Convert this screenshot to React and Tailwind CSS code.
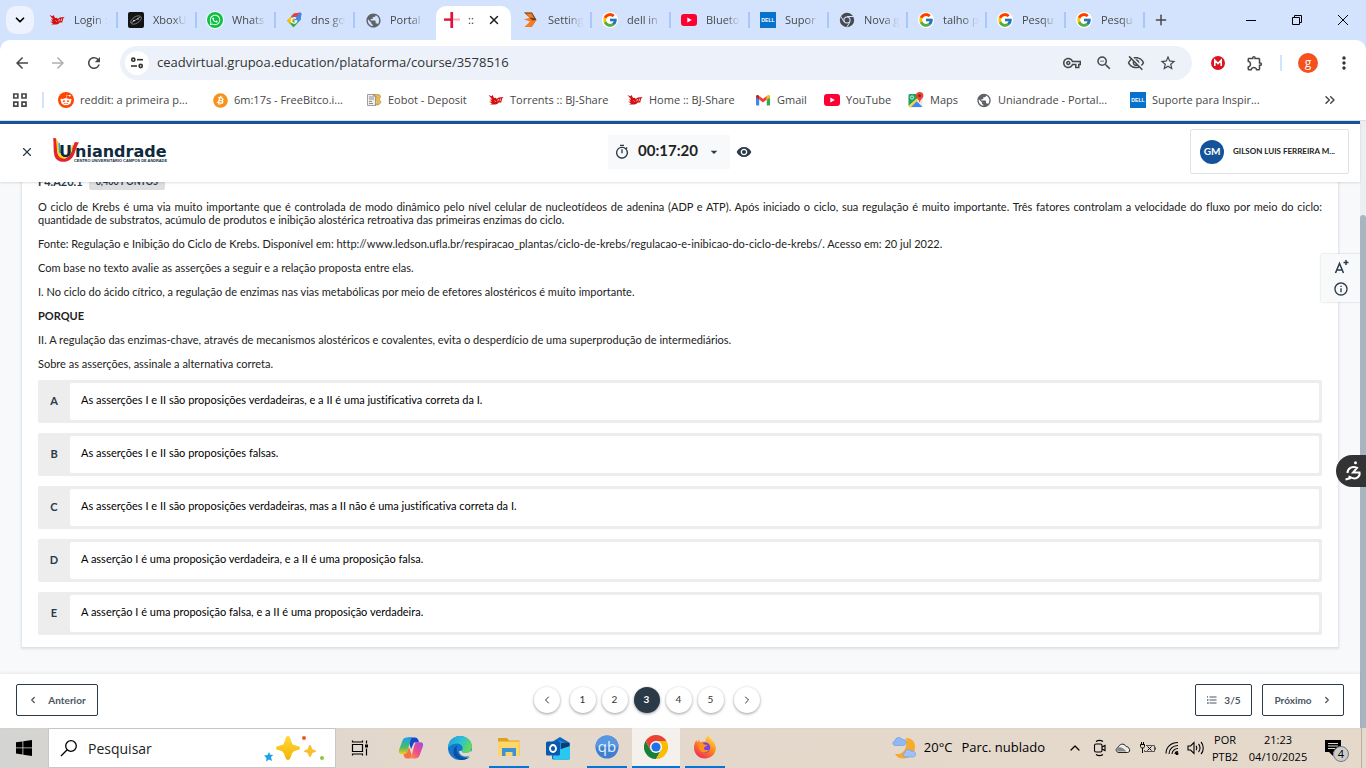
import { useState } from 'react'
import {
  MdArrowBack, MdArrowForward, MdRefresh, MdOutlineVpnKey, MdOutlineZoomOut, MdOutlineVisibilityOff,
  MdStarOutline, MdMoreVert, MdPublic, MdOutlineTimer, MdVisibility, MdArrowDropDown,
  MdFormatListNumbered, MdInfoOutline, MdOutlineExtension,
} from 'react-icons/md'
import { FcGoogle } from 'react-icons/fc'
import { FaRedditAlien, FaBitcoin, FaWhatsapp } from 'react-icons/fa'
import { ChevronLeft, ChevronRight, ChevronsRight, ChevronDown, ChevronUp, Plus, X } from 'lucide-react'

/* ---------- Ícones ---------- */

const Dragon = () => (
  <svg viewBox="0 0 16 16" className="size-4">
    <path d="M.5 3 3.500 4.200 4.600 3 6 6l2-.3L8.600 7l2.200-1.400 4.800-.6-1.400 1.400-1 4-2.400.2-1.600 1.400-2 .6H2.200l1.800-1.400L1 9.800l3-.4L1.600 7.600l2.600-.2z" fill="#d40f0f" />
    <path d="m6.500 8.600 1.200 1.200M10.500 7l-.8 2.400M12.600 6.600 12 9.200" stroke="#fff" strokeWidth=".7" />
  </svg>
)

const Xbox = () => (
  <svg viewBox="0 0 16 16" className="size-4">
    <rect width="16" height="16" rx="2" fill="#141414" />
    <ellipse cx="8" cy="8" rx="6" ry="3.2" transform="rotate(-32 8 8)" fill="none" stroke="#999" strokeWidth=".7" />
    <path d="M3.500 10.500c2-1 5.500-3.400 8.500-5.500" stroke="#ddd" strokeWidth=".7" fill="none" />
    <circle cx="6" cy="8.500" r=".8" fill="#eee" /><circle cx="10" cy="7" r=".7" fill="#eee" />
  </svg>
)

const Whats = () => (
  <span className="flex size-4 items-center justify-center rounded-full bg-[#0cc143] ring-1 ring-white">
    <FaWhatsapp className="size-3 text-white" />
  </span>
)

const GoogleTag = () => (
  <svg viewBox="0 0 16 16" className="size-4">
    <path d="m1 8.500 6.500 7L14.500 8l1-6.500z" fill="#34a853" />
    <path d="m1 8.500 3 3.500L11 5 8 1.500z" fill="#fbbc04" />
    <path d="M8 1.500 14.500.5l1 1-1 6L12 10 5 4.500z" fill="#4285f4" />
    <path d="M8 1.500 14.500.5 10 5 5 4.500z" fill="#ea4335" />
    <path d="M10 6.600A2.700 2.700 0 1 0 10.700 9H8.400" fill="none" stroke="#fff" strokeWidth="1.300" />
  </svg>
)

const Globe = () => <MdPublic className="size-[17px] text-[#5f6368]" />

const GoogleG = () => (
  <span className="flex size-4 items-center justify-center rounded-full bg-white"><FcGoogle className="size-4" /></span>
)

const Settings = () => (
  <svg viewBox="0 0 16 16" className="size-4">
    <path d="M1 .5h8L13.500 8 9 15H1.500L7 9.500.8 7.200 6.500 6z" fill="#f47b20" />
    <path d="M1 .5h8L13.500 8l-3.700.5-3-2.500H8z" fill="#333" opacity=".75" />
    <path d="M3 1.500h5.500l2.700 4.700-4.500-.9z" fill="#f47b20" />
  </svg>
)

const YouTube = () => (
  <svg viewBox="0 0 16 16" className="size-4">
    <rect y="2" width="16" height="12" rx="3" fill="#f03" />
    <path d="m6.300 5.400 4.500 2.600-4.500 2.600z" fill="#fff" />
  </svg>
)

const Dell = () => (
  <svg viewBox="0 0 16 16" className="size-4">
    <rect width="16" height="16" fill="#0672cb" />
    <text x="8" y="10" textAnchor="middle" fontSize="5.200" fontWeight="700" fill="#fff" fontFamily="Liberation Sans, sans-serif">DELL</text>
  </svg>
)

const ChromeGray = () => (
  <svg viewBox="0 0 16 16" className="size-4">
    <circle cx="8" cy="8" r="7.200" fill="#474b50" />
    <circle cx="8" cy="8" r="3.600" fill="#d3e3fd" /><circle cx="8" cy="8" r="2.500" fill="#474b50" />
    <path d="M8 4.500h6.800M5 9.800 1.700 4.200M11 9.800 7.700 15.300" stroke="#d3e3fd" strokeWidth="1" />
  </svg>
)

const Cross = () => (
  <svg viewBox="0 0 16 16" className="size-4">
    <path d="M6.300 0h3v6.500H16v2H9.300V16h-3V8.500H0v-2h6.300z" fill="#f7a8b0" />
    <path d="M6.500 0H9v16H6.500zM0 6.500h9v2.200H0z" fill="#dc143c" />
  </svg>
)

const Reddit = () => (
  <span className="flex size-4 items-center justify-center rounded-full bg-[#ff4500]">
    <FaRedditAlien className="size-3 text-white" />
  </span>
)

const Bitcoin = () => <FaBitcoin className="size-[15px] text-[#f7931a]" />

const Eobot = () => (
  <svg viewBox="0 0 16 16" className="size-4">
    <path d="M1.500 2.500h8v11h-8z" fill="#eee" stroke="#888" strokeWidth=".8" />
    <path d="M3 5h5M3 7h5M3 9.500h3M3 11.500h4" stroke="#777" strokeWidth=".8" />
    <path d="M7 3.500c4-1.500 7-1 7.500.5S12 7.500 14 8.500s.5 5-5 4.500c2-1.500 3-3 1-4s1-2.500 1-4z" fill="#e9bd55" stroke="#a37b22" strokeWidth=".6" />
  </svg>
)

const Gmail = () => (
  <svg viewBox="0 0 16 16" className="size-4">
    <path d="M1 4v8.500c0 .6.400 1 1 1h2.200V7.500L1 5z" fill="#4285f4" />
    <path d="M15 4v8.500c0 .6-.400 1-1 1h-2.200V7.500L15 5z" fill="#34a853" />
    <path d="M4.200 7.600V3.900L8 6.800l3.800-2.900v3.700L8 10.500z" fill="#ea4335" />
    <path d="M1 4.300v1.100l3.200 2.400V3.900l-.6-.5C2.600 2.600 1 3.300 1 4.300z" fill="#c5221f" />
    <path d="M15 4.300v1.100l-3.200 2.400V3.900l.6-.5c1-.8 2.600-.1 2.600.9z" fill="#fbbc04" />
  </svg>
)

const Maps = () => (
  <svg viewBox="0 0 16 16" className="size-4">
    <rect x=".5" y="2" width="14" height="13.500" rx="1.500" fill="#e8e8e8" />
    <path d="M.5 3.500A1.500 1.500 0 0 1 2 2h8v4L.5 14z" fill="#1da462" />
    <path d="M1 15 8 8.500l6.500 6.500z" fill="#4285f4" />
    <path d="M.5 14 11 4.500l1 1.500L2.500 15.500z" fill="#fdd835" />
    <path d="M11.700 0a3.700 3.700 0 0 0-3.700 3.700C8 6.500 11.300 7 11.700 11c.4-4 3.700-4.500 3.700-7.300A3.700 3.700 0 0 0 11.700 0z" fill="#ea4335" />
    <circle cx="11.700" cy="3.700" r="1.300" fill="#8c1c13" />
    <circle cx="4" cy="5.500" r="1.600" fill="none" stroke="#fff" strokeWidth=".8" />
  </svg>
)

const Tune = () => (
  <svg viewBox="0 0 16 16" className="size-4" fill="none" stroke="#333" strokeWidth="1.600">
    <circle cx="4.300" cy="4.700" r="1.600" /><path d="M8 4.700h6" />
    <circle cx="11.700" cy="11" r="1.600" /><path d="M2 11h6" />
  </svg>
)

const Grid = () => (
  <svg viewBox="0 0 16 16" className="size-4" fill="none" stroke="#474747" strokeWidth="1.700">
    <path d="M1.800 2h4v4h-4zM10 2h4v4h-4zM1.800 10.200h4v4h-4zM10 10.200h4v4h-4z" />
  </svg>
)

const Mega = () => (
  <svg viewBox="0 0 16 16" className="size-4">
    <circle cx="8" cy="8" r="7" fill="#dc1420" />
    <path d="M4.800 11V5.200L8 8.600l3.200-3.400V11" fill="none" stroke="#fff" strokeWidth="1.600" />
  </svg>
)

const Logo = () => (
  <svg width="118" height="30" viewBox="0 0 118 30" aria-label="Uniandrade">
    <path d="M1.200 1.200c1.200-.4 2.500 0 3 .8 1.200 5 .3 10 1.600 15 1 4 7.500 5 11 2.200C20.500 15.500 20 10 23 5.200l4 .4C23 11 24 17 19.500 21.500 14 27 4.500 25.500 2.500 19 1 13.500 2 7 1.200 1.200z" fill="#e5232b" />
    <path d="M5.200 4c1 5 0 9 1.500 12.500 1 3.500 4 4.500 7 4" fill="none" stroke="#ffd400" strokeWidth="2" />
    <path d="M7 6c.8 4 0 7 1.200 10" fill="none" stroke="#24a9e1" strokeWidth="1.600" />
    <path d="M20.800 8c-1.500 4-1.800 8-4.600 10" fill="none" stroke="#ffd400" strokeWidth="1.500" />
    <text x="7" y="20" fontSize="16" fontWeight="700" fill="#0e2a3c" fontFamily="DejaVu Sans, sans-serif">U</text>
    <path d="m24.500 5.500-3 7" stroke="#e5232b" strokeWidth="3" />
    <text x="23" y="20" fontSize="16" fontWeight="700" fill="#0e2a3c" fontFamily="DejaVu Sans, sans-serif">niandrade</text>
    <text x="22" y="25" fontSize="3.900" fontWeight="700" fill="#0e2a3c" fontFamily="Liberation Sans, sans-serif">CENTRO UNIVERSITÁRIO CAMPOS DE ANDRADE</text>
  </svg>
)

/* ---------- Navegador ---------- */

const TABS_LEFT = [['Login :', Dragon], ['XboxU', Xbox], ['Whats', Whats], ['dns go', GoogleTag], ['Portal', Globe]]
const TABS_RIGHT = [
  ['Setting', Settings], ['dell in', GoogleG], ['Blueto', YouTube], ['Supor', Dell], ['Nova g', ChromeGray],
  ['talho p', GoogleG], ['Pesqu', GoogleG], ['Pesqu', GoogleG],
]

const BOOKMARKS = [
  ['reddit: a primeira p...', Reddit, 'w-[154px]'],
  ['6m:17s - FreeBitco.i...', Bitcoin, 'w-[154px]'],
  ['Eobot - Deposit', Eobot, 'w-[122px]'],
  ['Torrents :: BJ-Share', Dragon, 'w-[139px]'],
  ['Home :: BJ-Share', Dragon, 'w-[128px]'],
  ['Gmail', Gmail, 'w-[69px]'],
  ['YouTube', YouTube, 'w-[84px]'],
  ['Maps', Maps, 'w-[68px]'],
  ['Uniandrade - Portal...', Globe, 'w-[154px]'],
  ['Suporte para Inspir...', Dell, 'w-[154px]'],
]

function Tab({ label, Icon, last }) {
  return (
    <button className="flex h-7 w-[79px] shrink-0 items-center pl-2.5">
      <span className="flex w-[25px] shrink-0">
        <Icon />
      </span>
      <span className="w-9 text-left whitespace-nowrap [mask-image:linear-gradient(to_right,#000_55%,rgba(0,0,0,0.1)_90%)]">{label}</span>
      {!last && <span className="ml-auto h-4 w-0.5 bg-[#a8c7fa]" />}
    </button>
  )
}

function TabStrip() {
  return (
    <div className="flex h-10 items-center bg-[#d3e3fd] text-[11px] text-[#474747]">
      <button aria-label="Pesquisar guias" className="mr-[5px] ml-1.5 flex size-7 shrink-0 items-center justify-center rounded-[10px] bg-[#edf3fe]">
        <ChevronDown className="size-3.5 text-black" strokeWidth={3} />
      </button>
      {TABS_LEFT.map(([label, Icon], i) => <Tab key={i} label={label} Icon={Icon} last={i === 4} />)}
      <div className="flex w-[79px] shrink-0 items-end self-end">
        <div className="mx-0.5 flex h-[34px] flex-1 items-center rounded-t-[10px] bg-white pb-1.5 pl-2 text-[#1f1f1f]">
          <Cross />
          <span className="ml-2 w-4">::</span>
          <button aria-label="Fechar guia" className="ml-auto mr-2.5"><X className="size-3.5" strokeWidth={2.5} /></button>
        </div>
      </div>
      {TABS_RIGHT.map(([label, Icon], i) => <Tab key={i} label={label} Icon={Icon} />)}
      <button aria-label="Nova guia" className="ml-2 flex size-4 items-center justify-center"><Plus className="size-4" strokeWidth={2.2} /></button>
      <div className="ml-auto flex text-black">
        <button aria-label="Minimizar" className="flex h-10 w-[46px] items-center justify-center">
          <svg className="size-2.5" viewBox="0 0 10 10"><path d="M0 5.500h10" stroke="#000" /></svg>
        </button>
        <button aria-label="Restaurar" className="flex h-10 w-[46px] items-center justify-center">
          <svg className="size-2.5" viewBox="0 0 10 10" fill="none" stroke="#000"><path d="M.5 2.500h7v7h-7zM2.500 2.500v-2h7v7h-2" /></svg>
        </button>
        <button aria-label="Fechar" className="flex h-10 w-[46px] items-center justify-center">
          <svg className="size-2.5" viewBox="0 0 10 10" stroke="#000"><path d="m0 0 10 10M10 0 0 10" /></svg>
        </button>
      </div>
    </div>
  )
}

function Toolbar() {
  return (
    <div className="bg-[#d3e3fd]">
      <div className="flex h-[46px] items-center rounded-t-[10px] bg-white pr-3 text-[#474747]">
        <button aria-label="Voltar" className="ml-1 flex w-9 justify-center"><MdArrowBack className="size-[18px]" /></button>
        <button aria-label="Avançar" className="flex w-9 justify-center text-[#b0b0b0]"><MdArrowForward className="size-[18px]" /></button>
        <button aria-label="Recarregar" className="flex w-9 justify-center"><MdRefresh className="size-[18px]" /></button>
        <div className="ml-2 flex h-[34px] flex-1 items-center rounded-full bg-[#edf1fa] pr-[15px] pl-[5px]">
          <button aria-label="Informações do site" className="flex size-6 items-center justify-center rounded-full bg-white"><Tune /></button>
          <input aria-label="Endereço" defaultValue="ceadvirtual.grupoa.education/plataforma/course/3578516"
            className="ml-2 min-w-0 flex-1 bg-transparent text-[13px] text-[#333] outline-none" />
          <div className="flex gap-3.5">
            <button aria-label="Senhas"><MdOutlineVpnKey className="size-[18px]" /></button>
            <button aria-label="Zoom"><MdOutlineZoomOut className="size-[18px]" /></button>
            <button aria-label="Cookies bloqueados"><MdOutlineVisibilityOff className="size-[18px]" /></button>
            <button aria-label="Favoritar"><MdStarOutline className="size-[18px]" /></button>
          </div>
        </div>
        <button aria-label="MEGA" className="ml-4.5"><Mega /></button>
        <button aria-label="Extensões" className="ml-5"><MdOutlineExtension className="size-[18px]" /></button>
        <span className="mx-4 h-4 w-0.5 bg-[#d3e3fd]" />
        <button className="flex size-5 items-center justify-center rounded-full bg-[#f4511e] text-[12px] text-white">g</button>
        <button aria-label="Menu" className="ml-4"><MdMoreVert className="size-5 text-[#333]" /></button>
      </div>
    </div>
  )
}

function Bookmarks() {
  return (
    <nav className="flex h-[34px] items-center bg-white pr-7 pb-1.5 pl-3 text-[11px] text-[#474747]">
      <button aria-label="Apps"><Grid /></button>
      <span className="mr-3.5 ml-3.5 h-4 w-0.5 bg-[#d3e3fd]" />
      {BOOKMARKS.map(([label, Icon, width], i) => (
        <a key={i} href="#" className={`flex shrink-0 items-center gap-1.5 whitespace-nowrap ${width}`}>
          <span className="flex w-4 shrink-0 justify-center"><Icon /></span>
          {label}
        </a>
      ))}
      <button aria-label="Mais favoritos" className="ml-auto"><ChevronsRight className="size-4" strokeWidth={2.2} /></button>
    </nav>
  )
}

/* ---------- Página ---------- */

const OPTIONS = [
  ['A', 'As asserções I e II são proposições verdadeiras, e a II é uma justificativa correta da I.'],
  ['B', 'As asserções I e II são proposições falsas.'],
  ['C', 'As asserções I e II são proposições verdadeiras, mas a II não é uma justificativa correta da I.'],
  ['D', 'A asserção I é uma proposição verdadeira, e a II é uma proposição falsa.'],
  ['E', 'A asserção I é uma proposição falsa, e a II é uma proposição verdadeira.'],
]

function PageHeader() {
  return (
    <header className="relative z-10 flex h-[61px] shrink-0 items-center border-t-[3px] border-[#14539a] bg-white px-[11px] pb-[3px] shadow-[0_1px_2px_rgba(0,0,0,0.12)]">
      <div className="flex flex-1 items-center gap-[18px]">
        <button aria-label="Fechar" className="ml-[9px]"><X className="size-3.5 text-[#2b3a48]" strokeWidth={2} /></button>
        <Logo />
      </div>
      <div className="flex items-center gap-1.5">
        <button className="flex h-[34px] items-center bg-[#f7f9fb] px-1.5 text-[15px] font-bold text-[#222]">
          <MdOutlineTimer className="mr-2 size-4 text-[#2b3a48]" />
          <span className="pb-0.5">00:17:20</span>
          <MdArrowDropDown className="mr-0.5 ml-2 size-4 text-[#2b3a48]" />
        </button>
        <button aria-label="Ocultar tempo"><MdVisibility className="size-4 text-[#2b3a48]" /></button>
      </div>
      <div className="flex flex-1 justify-end">
        <button className="flex h-[45px] w-[159px] items-center gap-[9px] rounded-xs border border-[#dfe3e8] pl-[9px]">
          <span className="flex size-6 items-center justify-center rounded-full bg-[#14539a] text-[10px] font-bold text-white">GM</span>
          <span className="pb-0.5 text-[8px] font-bold whitespace-nowrap text-[#222]">GILSON LUIS FERREIRA M...</span>
        </button>
      </div>
    </header>
  )
}

function Question() {
  const [answer, setAnswer] = useState(null)

  return (
    <section className="relative min-h-0 flex-1 overflow-hidden bg-[#f7f9fb] px-[22px]">
      <div className="-mt-2 bg-white px-4 pb-3 shadow-[0_1px_2px_1px_rgba(180,190,200,0.4)]">
        <div className="flex h-4 items-center gap-1.5 text-[11px] font-bold text-[#2b3a48]">
          <h2>F4.A20.1</h2>
          <span className="h-4 rounded-xs bg-[#dedede] px-[7px] text-[9px] leading-4">0,400 PONTOS</span>
        </div>
        <div className="mt-2.5 space-y-[11px] text-[11px] leading-[13px] text-[#222]">
          <p className="text-justify">
            O ciclo de Krebs é uma via muito importante que é controlada de modo dinâmico pelo nível celular de nucleotídeos de adenina (ADP e ATP). Após iniciado o ciclo, sua regulação é muito importante. Três fatores controlam a velocidade do fluxo por meio do ciclo: quantidade de substratos, acúmulo de produtos e inibição alostérica retroativa das primeiras enzimas do ciclo.
          </p>
          <p>Fonte: Regulação e Inibição do Ciclo de Krebs. Disponível em: http://www.ledson.ufla.br/respiracao_plantas/ciclo-de-krebs/regulacao-e-inibicao-do-ciclo-de-krebs/. Acesso em: 20 jul 2022.</p>
          <p>Com base no texto avalie as asserções a seguir e a relação proposta entre elas.</p>
          <p>I. No ciclo do ácido cítrico, a regulação de enzimas nas vias metabólicas por meio de efetores alostéricos é muito importante.</p>
          <p className="font-bold">PORQUE</p>
          <p>II. A regulação das enzimas-chave, através de mecanismos alostéricos e covalentes, evita o desperdício de uma superprodução de intermediários.</p>
          <p>Sobre as asserções, assinale a alternativa correta.</p>
        </div>
        <div className="mt-2.5 flex flex-col gap-2.5">
          {OPTIONS.map(([letter, text]) => (
            <label key={letter} className="relative flex h-[43px] rounded-xs bg-[#ededed] p-[3px] pl-0">
              <input type="radio" name="alternativa" className="sr-only" checked={answer === letter} onChange={() => setAnswer(letter)} />
              <span className="flex w-8 items-center justify-center text-[11px] font-bold text-[#2b3a48]">{letter}</span>
              <span className="flex flex-1 items-center rounded-xs bg-white px-[11px] pb-0.5 text-[11px] text-black">{text}</span>
            </label>
          ))}
        </div>
      </div>

      <div className="absolute top-[72px] right-0 flex h-12 w-[39px] flex-col items-center justify-center gap-1.5 bg-[#f7f9fb] text-[#2b3a48] shadow-[0_0_2px_rgba(0,0,0,0.2)]">
        <button aria-label="Aumentar fonte" className="flex h-4">
          <svg className="h-4 w-4" viewBox="0 0 16 16" fill="none" stroke="currentColor" strokeWidth="1.500">
            <path d="M2.500 14 6.500 4.500 10.500 14M4 11h5M13 1v5M10.500 3.500h5" />
          </svg>
        </button>
        <button aria-label="Informações"><MdInfoOutline className="size-4" /></button>
      </div>
    </section>
  )
}

function PageFooter() {
  const circle = 'flex size-[26px] items-center justify-center rounded-full pb-px shadow-[0_1px_3px_rgba(0,0,0,0.4)]'
  const box = 'flex h-8 items-center justify-center gap-2.5 rounded-xs border border-[#2b3a48] text-[10px] font-bold text-[#4a5662]'
  return (
    <footer className="relative flex h-[54px] shrink-0 items-center justify-between bg-white px-4 pb-0.5 text-[#333] shadow-[0_-1px_3px_rgba(0,0,0,0.08)]">
      <button className={`w-[82px] ${box}`}><ChevronLeft className="size-2.5" strokeWidth={3} />Anterior</button>
      <div className="flex items-center gap-2.5 text-[10px]">
        <button aria-label="Página anterior" className={circle}><ChevronLeft className="size-3" /></button>
        <div className="flex gap-1.5">
          {[1, 2, 3, 4, 5].map(n => (
            <button key={n} className={n === 3 ? `${circle} bg-[#2b3a48] font-bold text-white` : circle}>{n}</button>
          ))}
        </div>
        <button aria-label="Próxima página" className={circle}><ChevronRight className="size-3" /></button>
      </div>
      <div className="flex gap-2.5">
        <button className={`w-[57px] ${box}`}><MdFormatListNumbered className="-mr-1 size-3" />3/5</button>
        <button className={`w-[82px] ${box}`}>Próximo<ChevronRight className="size-2.5" strokeWidth={3} /></button>
      </div>
    </footer>
  )
}

/* ---------- Barra de tarefas ---------- */

const Sparkles = () => (
  <svg width="64" height="28" viewBox="0 0 64 28">
    <defs>
      <linearGradient id="spark" x1="0" y1="0" x2="0" y2="1"><stop offset="0" stopColor="#ffd93b" /><stop offset="1" stopColor="#f5b400" /></linearGradient>
    </defs>
    <path d="M25 2c3 0 3 7 5 8.500S37 11.500 37 14s-5 2-7 4-2 8-5 8-3-6-5-8-7-1.500-7-4 5-2 7-3.500S22 2 25 2z" fill="url(#spark)" />
    <path d="M47 11c1.500 0 1.500 3.500 2.500 4.200S53 16 53 17.300s-2.500 1-3.500 1.800-1 4-2.500 4-1.500-3.200-2.500-4-3.500-.5-3.500-1.800 2.500-1.300 3.500-2.100S45.500 11 47 11z" fill="#fbbf2d" />
    <path d="m6 18 1.300 2.700 3 .3-2.300 2 1 4-3-1.500L3 27.500 3.500 24 1 21.500l3.500-.5z" fill="#1da1e8" />
    <circle cx="41" cy="4" r="2" fill="#f1592a" /><circle cx="59" cy="24" r="2" fill="#8cc63f" />
  </svg>
)

const TaskView = () => (
  <svg width="18" height="18" viewBox="0 0 18 18" fill="none" stroke="#000" strokeWidth="1.200">
    <path d="M1.500 5.500h10v7h-10zM1.500 1.500V3h10V1.500M1.500 16.500V15h10v1.500M15.500 1.500v3M15.500 9.500v7" />
    <path d="M14 5.500h3v3h-3z" fill="#000" stroke="none" />
  </svg>
)

const Copilot = () => (
  <svg width="26" height="26" viewBox="0 0 26 26">
    <defs>
      <linearGradient id="cp1" x1="0" y1="0" x2="0" y2="1"><stop offset="0" stopColor="#16a5e8" /><stop offset=".6" stopColor="#4fbb68" /><stop offset="1" stopColor="#f5cc13" /></linearGradient>
      <linearGradient id="cp2" x1="1" y1="0" x2="0" y2="1"><stop offset="0" stopColor="#9b50e8" /><stop offset=".5" stopColor="#ee4a8b" /><stop offset="1" stopColor="#ff9b3d" /></linearGradient>
    </defs>
    <path d="M9.500 2.500H17c2 0 3 1.500 3.500 3l.5 2h-5L13 14z" fill="#1647c9" />
    <path d="M9 2.500h6.500c-2 0-2.600 1.500-3.200 3.500L9.500 16c-.5 2-1.500 3-3.500 3H3.500C1 19 .5 17 1 15L4.500 5.500c.7-2 2-3 4.500-3z" fill="url(#cp1)" />
    <path d="M17 23.500h-6.500c2 0 2.600-1.500 3.200-3.500L16.500 10c.5-2 1.500-2.800 3.500-2.800h2.500c2.500 0 3 1.800 2.500 3.800l-3.500 9.500c-.7 2-2 3-4.500 3z" fill="url(#cp2)" />
    <path d="M16.500 23.500H9c-2 0-3-1.500-3.500-4.500H6c2 0 3-1 3.500-3l1.500-4 2.700 8c-.6 2-1.200 3.500-3.200 3.500z" fill="#f77045" />
  </svg>
)

const Edge = () => (
  <svg width="26" height="26" viewBox="0 0 26 26">
    <defs>
      <linearGradient id="ed1" x1="0" y1="0" x2="1" y2=".4"><stop offset="0" stopColor="#1c9de0" /><stop offset=".6" stopColor="#2cc3d2" /><stop offset="1" stopColor="#62d95a" /></linearGradient>
    </defs>
    <circle cx="13" cy="13" r="12" fill="#1476cf" />
    <path d="M1 13C1 6 6.500 1 13 1s12 4.500 12 10.500c0 4-3 6.500-6.500 6.500-2.500 0-4.500-1-3.500-2.500 2-3-.5-7-5-7-5 0-8 3-9 4.500z" fill="url(#ed1)" />
    <path d="M9.500 14c0 5 4 9 9 9 1.500 0 3-.5 4.500-1.500-2 2.500-5.500 4-9 3.500C9 24 6 20.500 6.500 16c.3-3 2-5 4.500-5.500-1 .8-1.500 2-1.500 3.500z" fill="#0c4f9e" />
    <path d="M15 15.500c-1 1.500 1 2.500 3.500 2.500 2.500 0 4.500-1 5.700-2.800l1 4.300-4.200 1.800c-5 1-8.500-1.300-9-5z" fill="#e3d8cb" />
  </svg>
)

const Explorer = () => (
  <svg width="24" height="22" viewBox="0 0 24 22">
    <path d="M1 2h9l2 2.500h10.500V20H1z" fill="#e0a11b" />
    <path d="M1 5.500h21.500V20H1z" fill="#ffd66b" />
    <path d="M5 12h14v8h-3.500v-4h-7v4H5z" fill="#3a93d5" />
  </svg>
)

const Outlook = () => (
  <svg width="26" height="24" viewBox="0 0 26 24">
    <path d="M7 6 15 1l10 6v15a1.500 1.500 0 0 1-1.500 1.500h-15A1.500 1.500 0 0 1 7 22z" fill="#0a67c2" />
    <path d="m14 4 9 4.500L14 15z" fill="#1490df" /><path d="M16 7h8v4l-8 5z" fill="#123b6d" />
    <path d="M7 16 25 10v12a1.500 1.500 0 0 1-1.500 1.500h-15z" fill="#28c8f2" />
    <rect x="1" y="5.500" width="14" height="14" rx="1.500" fill="#0a58b0" />
    <ellipse cx="8" cy="12.500" rx="3" ry="3.500" fill="none" stroke="#fff" strokeWidth="1.900" />
  </svg>
)

const QBit = () => (
  <svg width="24" height="24" viewBox="0 0 24 24">
    <circle cx="12" cy="12" r="11.500" fill="#3f7fd0" />
    <path d="M.5 12a11.500 11.500 0 0 1 23 0z" fill="#5796e0" />
    <text x="12" y="16.500" textAnchor="middle" fontSize="15" fill="#e5f1ff" fontFamily="Open Sans, sans-serif">qb</text>
  </svg>
)

const Chrome = () => (
  <svg width="24" height="24" viewBox="0 0 24 24">
    <path d="M6.800 15 1.600 6A12 12 0 0 0 12 24l5.200-9z" fill="#188038" />
    <path d="M12 6h10.400A12 12 0 0 0 1.600 6l5.200 9z" fill="#ea4335" />
    <path d="M22.400 6H12l5.200 9L12 24A12 12 0 0 0 22.400 6z" fill="#fbbc04" />
    <circle cx="12" cy="12" r="6" fill="#fff" /><circle cx="12" cy="12" r="4.600" fill="#1a73e8" />
  </svg>
)

const Firefox = () => (
  <svg width="24" height="24" viewBox="0 0 24 24">
    <defs>
      <linearGradient id="ff" x1=".8" y1="0" x2=".2" y2="1"><stop offset="0" stopColor="#ffe14a" /><stop offset=".45" stopColor="#ff8a1f" /><stop offset="1" stopColor="#f0245c" /></linearGradient>
    </defs>
    <path d="M15.500.5c1 3 4 4 6 7.500 4 8-1.500 15.500-9.500 15.500C5 23.500.8 18 1 12c.1-3 1-5 2.500-7l.8 2.500L6 4.500l1 2.800c2-1 4-.8 5.500-.3C12 4 13.500 2 15.500.5z" fill="url(#ff)" />
    <circle cx="12" cy="12.500" r="5.200" fill="#7542e5" />
    <path d="M5.500 9c2-1.500 4.500-1 6 .5 1.500.3 2.500 0 3 .5-1 1.500-2.500 1.500-3.500 3-.5 1.500 2 3 5 1.500-1.500 3.500-6 4-8.500 1.500C5.500 14 5 11 5.500 9z" fill="#ff8f20" />
  </svg>
)

const Weather = () => (
  <svg width="26" height="24" viewBox="0 0 26 24">
    <path d="M15 2c6 0 9.500 4 9 9.500-.5 6-4.500 11-11.500 11-4 0-7-1.500-8.500-4.500 7 1 13-4 11-16z" fill="#f7ab2c" />
    <path d="M4 9.500C1.500 9.500.8 5.500 4 5c0-4 6-4.500 7-1.500 3-.5 4.500 1 4 3s-1 3-3 3z" fill="#8fb8f5" stroke="#6a95e0" strokeWidth=".6" />
    <path d="M14.500 21c-3 0-3.500-4-.5-4.500 0-3.500 5-4 6-1.500 3-.5 4.500 1 4.500 3s-1 3-3 3z" fill="#9dc1f8" stroke="#6a95e0" strokeWidth=".6" />
  </svg>
)

const Cloud = () => (
  <svg width="16" height="12" viewBox="0 0 16 12">
    <path d="M4 10.500C.8 10.500 0 6.500 3 5.800 4 2 9 .5 11 4.500c3.500 0 5.500 5.500 1.500 6z" fill="#eee" stroke="#222" />
    <path d="M2.500 6c3-1.500 5-.5 9 3.500H4C2 9.500 1.500 7.500 2.500 6z" fill="#888" />
  </svg>
)

const MeetNow = () => (
  <svg width="14" height="18" viewBox="0 0 14 18" fill="none" stroke="#000" strokeWidth="1.100">
    <rect x="1.500" y="5" width="7.500" height="8" rx="1.500" /><path d="m9 8 3-1.500v5L9 10M3 2.500c2-1.300 5-1.300 7 0M3 15.500c2 1.300 5 1.300 7 0" />
  </svg>
)

const Battery = () => (
  <svg width="18" height="14" viewBox="0 0 18 14" fill="none" stroke="#000">
    <path d="M7 4.500h8.500v6h-10V9M15.500 6.500h1v2h-1" stroke="#555" />
    <path d="M1.500 3.500h4v2c0 2-4 2-4 0zM2.500 1v2.500M4.500 1v2.500M3.500 7v5M8.500 5.500l4 4M12.500 5.500l-4 4" />
  </svg>
)

const Wifi = () => (
  <svg width="14" height="14" viewBox="0 0 14 14" fill="none" stroke="#000" strokeWidth="1.100">
    <path d="M1 12.500C1 6 6 1.500 13 1.500M4 13C4 8 8 4.500 13 4.500M7 13c0-3 3-5.500 6-5.500M10 13c0-1.500 1.500-2.500 3-2.500" />
    <circle cx="12" cy="12.500" r="1" fill="#000" />
  </svg>
)

const Speaker = () => (
  <svg width="18" height="14" viewBox="0 0 18 14" fill="none" stroke="#000" strokeWidth="1.100">
    <path d="M1 5h2.500L7 1.500v11L3.500 9H1zM9 5c1 1 1 3 0 4M11.500 3c2 2 2 6 0 8M14 1c3 3 3 9 0 12" />
  </svg>
)

const APPS = [
  ['Copilot', Copilot, ''],
  ['Edge', Edge, ''],
  ['Explorador de Arquivos', Explorer, 'w-10'],
  ['Outlook', Outlook, ''],
  ['qBittorrent', QBit, 'w-10'],
  ['Chrome', Chrome, 'w-12'],
  ['Firefox', Firefox, 'w-10'],
]

function Taskbar() {
  return (
    <div className="flex h-10 shrink-0 items-stretch bg-linear-to-r from-[#d4d4d2] via-[#e4d8cc] via-30% to-[#e5d9cc] text-black">
      <button aria-label="Iniciar" className="flex w-12 items-center justify-center">
        <svg className="size-4" viewBox="0 0 16 16"><path d="M0 2.300 6.500 1.400v6.100H0zM7.300 1.300 16 0v7.500H7.300zM0 8.300h6.500v6.200L0 13.600zM7.300 8.300H16V16l-8.700-1.300z" /></svg>
      </button>
      <label className="flex w-72 items-center border border-[#c8c8c8] bg-white pr-2 pl-[11px]">
        <svg className="size-[18px] shrink-0" viewBox="0 0 18 18" fill="none" stroke="#000" strokeWidth="1.300"><circle cx="11" cy="7" r="5.300" /><path d="M7.200 10.800 1 17" /></svg>
        <input aria-label="Pesquisar" placeholder="Pesquisar" className="ml-2.5 min-w-0 flex-1 bg-transparent text-[14px] outline-none placeholder:text-[#222]" />
        <Sparkles />
      </label>
      <button aria-label="Visão de tarefas" className="flex w-12 items-center justify-center"><TaskView /></button>
      <div className="ml-[3px] flex gap-px">
        {APPS.map(([name, Icon, line]) => (
          <button key={name} aria-label={name} className={`flex w-12 flex-col items-center ${name === 'Chrome' ? 'bg-[#f4f0eb]' : ''}`}>
            <span className="flex flex-1 items-center justify-center"><Icon /></span>
            {line && <span className={`h-0.5 bg-[#0078d7] ${line}`} />}
          </button>
        ))}
      </div>
      <div className="ml-auto flex items-center">
        <button className="mr-[22px] flex items-center gap-[7px] text-[13px] whitespace-nowrap">
          <Weather />
          <span>20°C</span>
          <span className="ml-0.5">Parc. nublado</span>
        </button>
        <div className="flex items-center gap-2">
          <button aria-label="Mostrar ícones ocultos" className="mr-0.5"><ChevronUp className="size-4" strokeWidth={1.8} /></button>
          <button aria-label="Reunir agora"><MeetNow /></button>
          <button aria-label="OneDrive"><Cloud /></button>
          <button aria-label="Bateria"><Battery /></button>
          <button aria-label="Rede"><Wifi /></button>
          <button aria-label="Volume"><Speaker /></button>
        </div>
        <button className="ml-1 w-8 text-center text-[11px] leading-[17px]">POR<br />PTB2</button>
        <button className="ml-1.5 w-[62px] text-center text-[11px] leading-[17px]">21:23<br />04/10/2025</button>
        <button aria-label="Notificações" className="relative mr-2.5 ml-2.5 flex w-8 items-center">
          <svg className="ml-1.5 size-4" viewBox="0 0 16 16"><path d="M0 0h16v12H8v4l-4-4H0z" /><path d="M3 3.500h10M3 6h10M3 8.500h7" stroke="#e5d9cc" /></svg>
          <span className="absolute top-1.5 left-3.5 flex size-4 items-center justify-center rounded-full border border-[#777] bg-[#ccc] text-[11px]">4</span>
        </button>
        <span className="mr-1 h-10 w-px bg-[#b5aca3]" />
      </div>
    </div>
  )
}

export default function App() {
  return (
    <div className="flex h-screen flex-col overflow-hidden bg-white font-['Open_Sans',sans-serif]">
      <TabStrip />
      <Toolbar />
      <Bookmarks />
      <main className="flex min-h-0 flex-1 border-t border-[#dbe0e6] font-['Lato',sans-serif] [font-variant-ligatures:none]">
        <div className="flex min-w-0 flex-1 flex-col">
          <PageHeader />
          <Question />
          <PageFooter />
        </div>
        <div className="flex w-1.5 flex-col bg-[#ebeff2] pt-[94px]">
          <div className="flex-1 rounded-t-full bg-[#a8b5c0]" />
        </div>
      </main>
      <Taskbar />
      <button aria-label="Acessibilidade" className="absolute top-[455px] right-0 flex h-8 w-[30px] items-center justify-center rounded-l-full bg-[#333] pl-1">
        <svg className="size-5" viewBox="0 0 20 20" fill="none" stroke="#fff" strokeWidth="2">
          <circle cx="12.500" cy="1.800" r="1.500" fill="#fff" stroke="none" />
          <path d="M4.500 12C4.500 7.500 9 4.500 14 6.800L10 11.500h6.500c1 4.500-4 7.500-8.500 5L5.500 15.500M8 17l-5.500 1.500" />
        </svg>
      </button>
    </div>
  )
}
